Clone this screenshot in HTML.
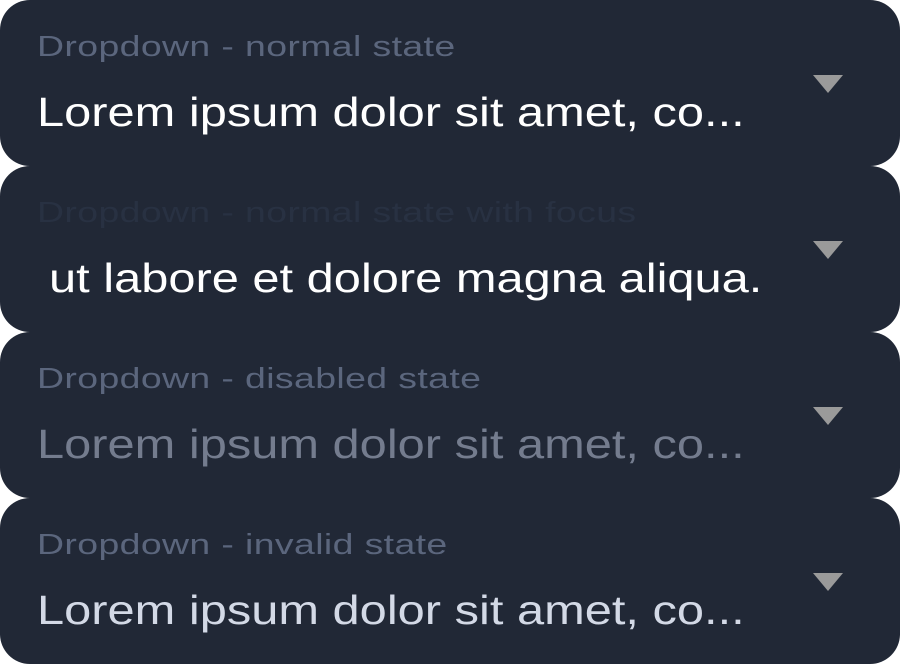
<!DOCTYPE html>
<html><head><style>
html,body{margin:0;padding:0;background:#fff;width:900px;height:664px;overflow:hidden}
.p{position:absolute;left:0;width:900px;height:166px;background:#212836;border-radius:30px;font-family:"Liberation Sans",sans-serif}
.l{position:absolute;left:37px;top:31px;font-size:29px;color:#5b667d;white-space:nowrap;letter-spacing:0.3px;transform:scaleX(1.29);transform-origin:0 0}
.v{position:absolute;left:37px;top:89px;font-size:41px;color:#fff;white-space:nowrap;transform:scaleX(1.19);transform-origin:0 0}
.t{position:absolute;left:813px;top:75px;width:0;height:0;border-left:15px solid transparent;border-right:15px solid transparent;border-top:18px solid #9a9a9a}
</style></head><body>
<div class="p" style="top:0"><div class="l">Dropdown - normal state</div><div class="v">Lorem ipsum dolor sit amet, co...</div><div class="t"></div></div>
<div class="p" style="top:166px"><div class="l" style="color:#283142">Dropdown - normal state with focus</div><div class="v" style="left:49px">ut labore et dolore magna aliqua.</div><div class="t"></div></div>
<div class="p" style="top:332px"><div class="l">Dropdown - disabled state</div><div class="v" style="color:#747c8e">Lorem ipsum dolor sit amet, co...</div><div class="t"></div></div>
<div class="p" style="top:498px"><div class="l">Dropdown - invalid state</div><div class="v" style="color:#d3d9e6">Lorem ipsum dolor sit amet, co...</div><div class="t"></div></div>
</body></html>
